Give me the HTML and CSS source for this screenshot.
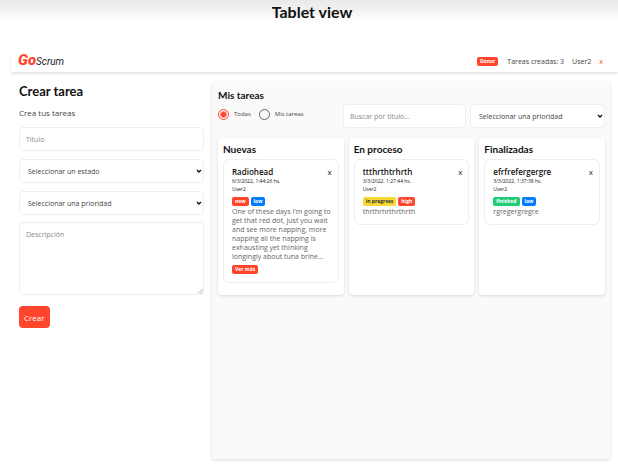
FILE: index.html
```html
<!DOCTYPE html>
<html lang="es">
<head>
<meta charset="utf-8">
<meta name="viewport" content="width=device-width, initial-scale=1">
<title>GoScrum</title>
<link rel="stylesheet" href="styles.css">
</head>
<body>
<h1 class="view-title">Tablet view</h1>
<div class="app">
  <header class="topbar">
    <a class="logo" href="#"><strong>Go</strong><span>Scrum</span></a>
    <div class="session">
      <button class="badge red" type="button">Donar</button>
      <span class="count">Tareas creadas: 3</span>
      <span class="user">User2</span>
      <button class="logout" type="button" aria-label="Salir">x</button>
    </div>
  </header>
  <main class="content">
    <form class="task-form">
      <h2>Crear tarea</h2>
      <p>Crea tus tareas</p>
      <input class="field" type="text" placeholder="Título" aria-label="Título">
      <div class="select">
        <select class="field" aria-label="Estado"><option>Seleccionar un estado</option></select>
        <svg class="arrow" viewBox="0 0 6 4"><path d="M1 1l2 2 2-2"/></svg>
      </div>
      <div class="select">
        <select class="field" aria-label="Prioridad"><option>Seleccionar una prioridad</option></select>
        <svg class="arrow" viewBox="0 0 6 4"><path d="M1 1l2 2 2-2"/></svg>
      </div>
      <div class="area">
        <textarea class="field" placeholder="Descripción" aria-label="Descripción"></textarea>
        <svg class="grip" viewBox="0 0 6 6"><path d="M1 5.500l4.500-4.500M3.500 5.500l2-2"/></svg>
      </div>
      <button class="submit" type="button">Crear</button>
    </form>
    <section class="board">
      <h2>Mis tareas</h2>
      <div class="filters">
        <div class="radios">
          <label><input type="radio" name="owner" checked>Todas</label>
          <label><input type="radio" name="owner">Mis tareas</label>
        </div>
        <input class="field search" type="text" placeholder="Buscar por título..." aria-label="Buscar por título">
        <div class="select priority">
          <select class="field" aria-label="Filtrar por prioridad"><option>Seleccionar una prioridad</option></select>
          <svg class="arrow" viewBox="0 0 6 4"><path d="M1 1l2 2 2-2"/></svg>
        </div>
      </div>
      <div class="columns">
        <section class="column">
          <h3>Nuevas</h3>
          <article class="card">
            <div class="card-head"><h4>Radiohead</h4><button class="close" type="button" aria-label="Eliminar">x</button></div>
            <p class="meta">6/3/2022, 1:44:26 hs.</p>
            <p class="meta">User2</p>
            <div class="tags"><button class="badge red" type="button">new</button><button class="badge blue" type="button">low</button></div>
            <p class="text">One of these days i'm going to get that red dot, just you wait and see more napping, more napping all the napping is exhausting yet thinking longingly about tuna brine...</p>
            <button class="badge red more" type="button">Ver más</button>
          </article>
        </section>
        <section class="column">
          <h3>En proceso</h3>
          <article class="card">
            <div class="card-head"><h4>ttthrthtrhrth</h4><button class="close" type="button" aria-label="Eliminar">x</button></div>
            <p class="meta">3/3/2022, 1:27:44 hs.</p>
            <p class="meta">User2</p>
            <div class="tags"><button class="badge yellow" type="button">in progress</button><button class="badge red" type="button">high</button></div>
            <p class="text">thrthrhrthrthrth</p>
          </article>
        </section>
        <section class="column">
          <h3>Finalizadas</h3>
          <article class="card">
            <div class="card-head"><h4>efrfrefergergre</h4><button class="close" type="button" aria-label="Eliminar">x</button></div>
            <p class="meta">3/3/2022, 1:37:38 hs.</p>
            <p class="meta">User2</p>
            <div class="tags"><button class="badge green" type="button">finished</button><button class="badge blue" type="button">low</button></div>
            <p class="text">rgregergregre</p>
          </article>
        </section>
      </div>
    </section>
  </main>
</div>
</body>
</html>
```
FILE: styles.css
```css
* { box-sizing: border-box; }
body {
  margin: 0;
  min-height: 100vh;
  display: flex;
  flex-direction: column;
  background: #fff linear-gradient(#e9e9e9, #f0f0f0 8px, #fff 22px) no-repeat;
  color: #444;
  font: 7px/9px "Open Sans", "Noto Sans", sans-serif;
}
h1, h2, h3, h4, p { margin: 0; color: #111; }
button, input, select, textarea { font: inherit; margin: 0; }
button { border: 0; padding: 0; }
.view-title {
  padding: 2px 0 0 6px;
  font: 700 16px/20px Lato, sans-serif;
  text-align: center;
}
.app { flex: 1; display: flex; flex-direction: column; margin: 28px 0 0 11px; }
.topbar {
  display: flex;
  align-items: center;
  justify-content: space-between;
  height: 22px;
  padding: 0 15px 0 7px;
  box-shadow: 0 2px 2px rgba(0, 0, 0, .1);
}
.logo {
  color: #222;
  font: italic 10px/22px Roboto, sans-serif;
  text-decoration: none;
}
.logo strong { color: #ff452b; font-size: 15px; font-weight: 900; }
.session { display: flex; align-items: center; gap: 8px; }
.count { margin-left: 1px; }
.logout { background: none; color: #ff452b; }
.content {
  flex: 1;
  display: grid;
  grid-template-columns: 185fr 398fr;
  gap: 8px;
  padding: 10px 8px 7px;
}
.task-form { display: flex; flex-direction: column; }
h2 { font: 700 10px/14px Lato, sans-serif; }
.task-form h2 { font-size: 13px; line-height: 18px; }
.task-form p { margin: 8px 0 9px; color: #444; font-size: 8px; line-height: 10px; }
.field {
  display: block;
  width: 100%;
  height: 24px;
  padding: 0 6px;
  border: 1px solid #eee;
  border-radius: 4px;
  background: #fff;
  color: #444;
}
.field::placeholder { color: #888; opacity: 1; }
.select { position: relative; }
.select .field { appearance: none; padding-left: 8px; }
.arrow {
  position: absolute;
  right: 2px;
  top: 10px;
  width: 6px;
  height: 4px;
  fill: none;
  stroke: #111;
  stroke-width: 1.4;
}
.task-form .select { margin-top: 8px; }
.area { position: relative; margin: 7px 0 11px; }
.area .field { height: 73px; padding: 7px 6px; resize: none; }
.grip {
  position: absolute;
  right: 1px;
  bottom: 1px;
  width: 6px;
  height: 6px;
  fill: none;
  stroke: #777;
  stroke-width: .6;
}
.submit {
  align-self: flex-start;
  height: 22px;
  padding: 0 5px;
  border-radius: 4px;
  background: #ff452b;
  color: #fff;
  font-size: 8px;
}
.board {
  padding: 6px;
  padding-right: 5px;
  background: #fafafa;
  box-shadow: 0 1px 3px rgba(0, 0, 0, .14);
}
.filters {
  display: grid;
  grid-template-columns: 121fr 123fr 135fr;
  gap: 4px;
  margin-top: 2px;
}
.radios { display: flex; gap: 8px; height: 21px; font-size: 6px; }
.radios label { display: flex; align-items: center; gap: 5px; }
.radios input {
  appearance: none;
  width: 11px;
  height: 11px;
  border: 1px solid #666;
  border-radius: 50%;
}
.radios input:checked {
  border-color: #ff452b;
  background: radial-gradient(circle, #ff452b 2px, transparent 4px);
}
.columns { display: grid; grid-template-columns: repeat(3, 1fr); gap: 5px; margin-top: 10px; }
.column {
  padding: 4px 5px 12px;
  border-radius: 4px;
  background: #fff;
  box-shadow: 0 1px 3px rgba(0, 0, 0, .14);
}
h3 { font: 700 10px/14px Lato, sans-serif; }
.card {
  margin-top: 3px;
  padding: 7px 6px 8px 8px;
  border: 1px solid #eee;
  border-radius: 6px;
}
.card-head { display: flex; justify-content: space-between; line-height: 10px; }
h4 { font: 600 8px/10px "Open Sans", sans-serif; }
.close { background: none; color: #222; font-size: 8px; line-height: 10px; }
.meta { color: #222; font-size: 5px; font-weight: 500; line-height: 8px; }
.tags { display: flex; gap: 2px; margin: 4px 0 1px; }
.badge {
  display: block;
  height: 9px;
  padding: 0 3px;
  border-radius: 2px;
  color: #fff;
  font: 700 5px/9px "Open Sans", sans-serif;
}
.red { background: #ff452b; }
.blue { background: #007bff; }
.green { background: #21cc75; }
.yellow { background: #f9d932; color: #333; }
.text { color: #666; font-size: 7px; line-height: 9px; }
.more { margin-top: 4px; }
```
